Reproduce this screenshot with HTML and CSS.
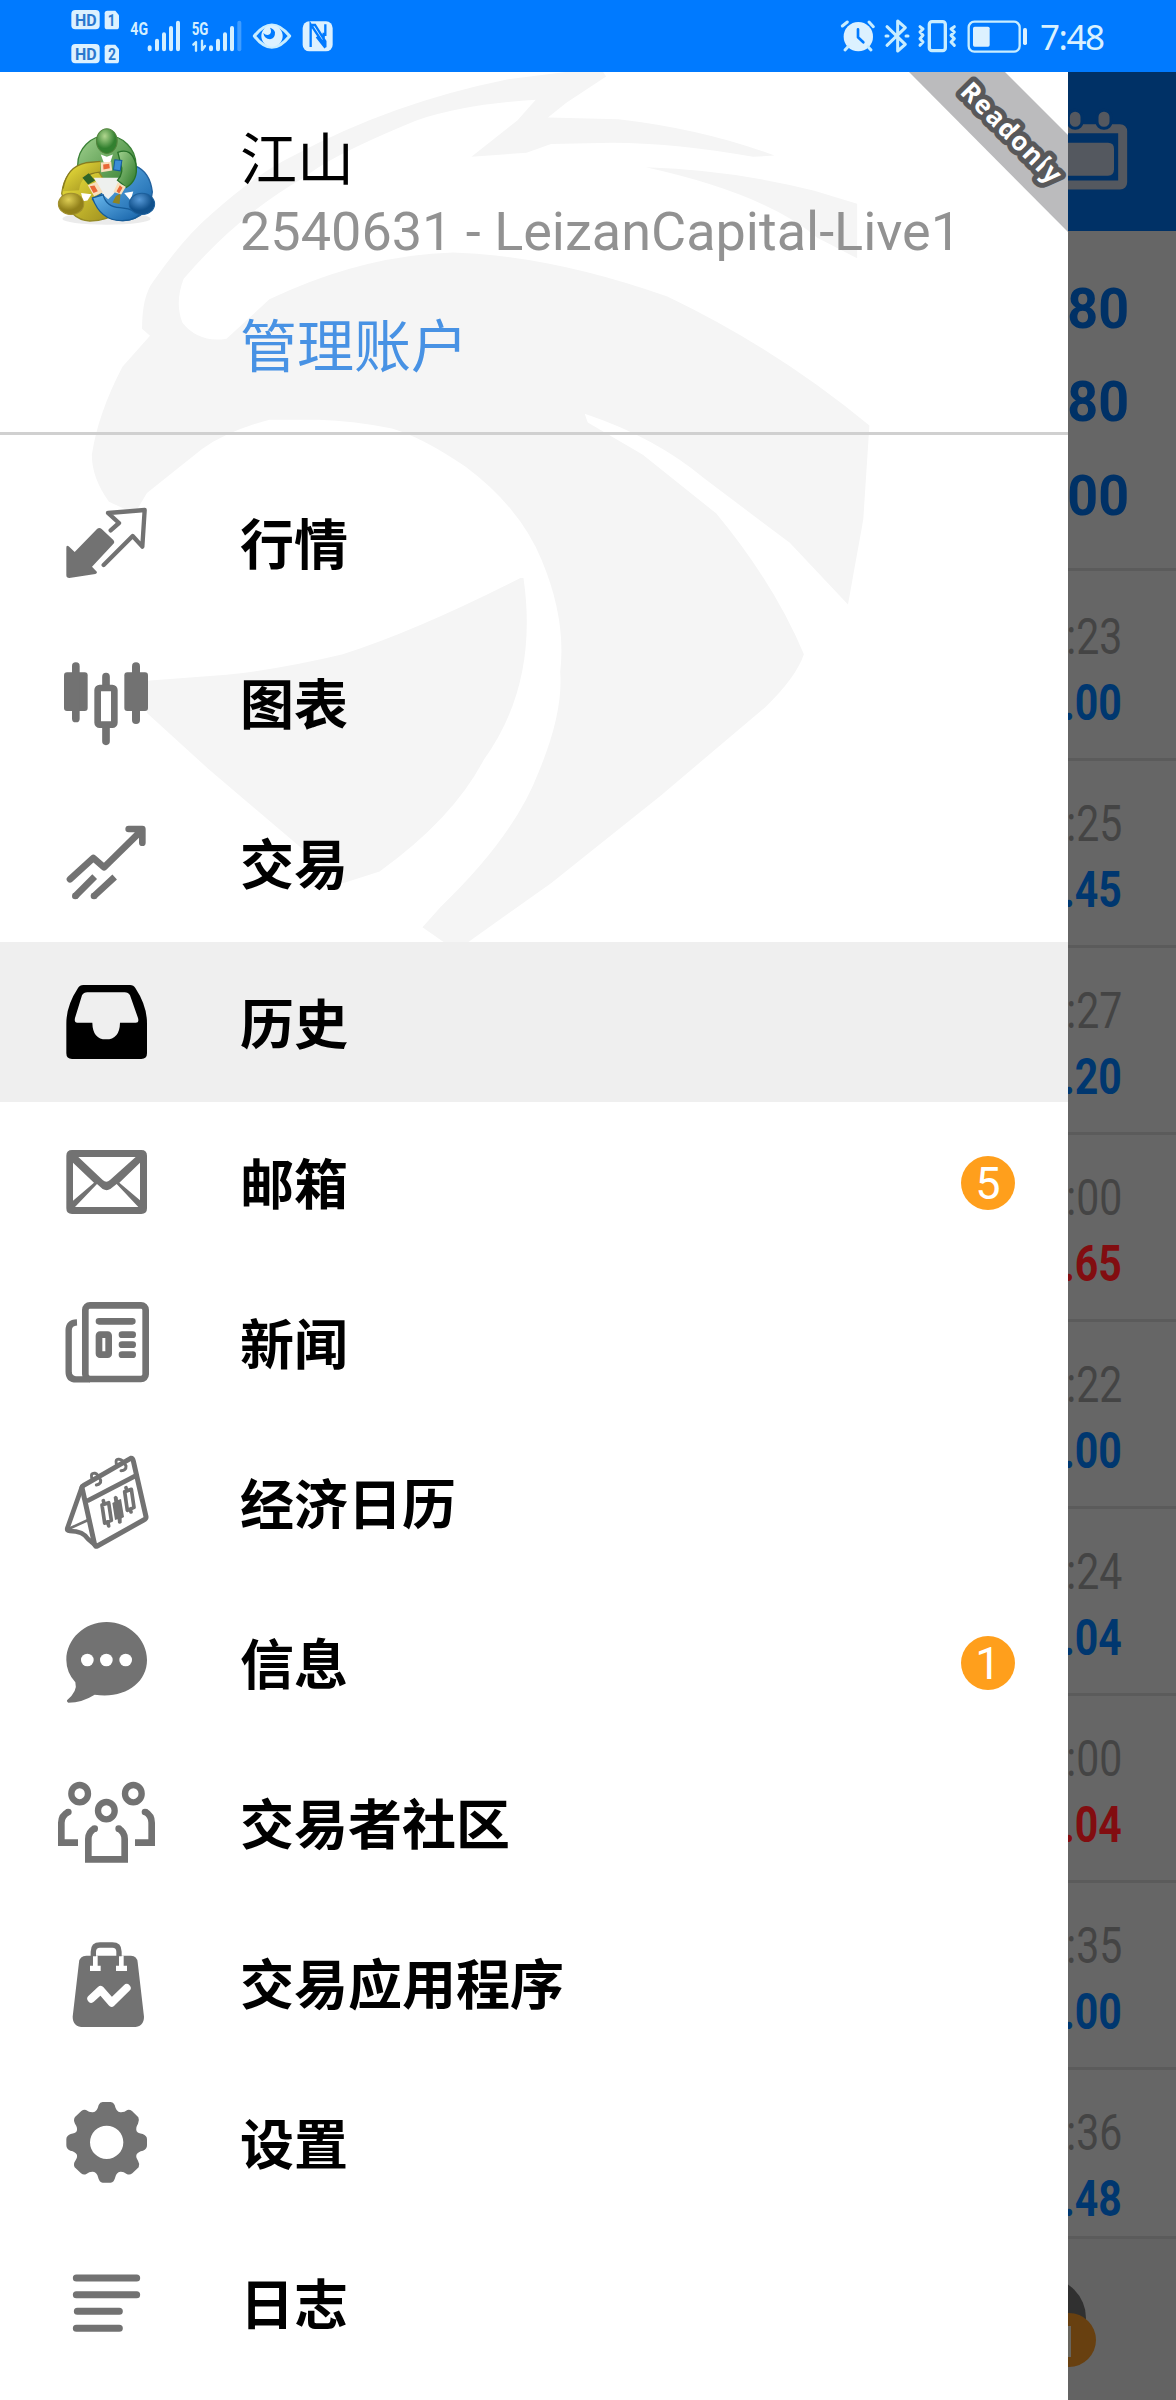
FILE: index.html
```html
<!DOCTYPE html>
<html lang="zh-CN">
<head>
    <meta charset="UTF-8">
    <meta name="viewport" content="width=device-width, initial-scale=1.0">
    <title>历史</title>
    <link rel="stylesheet" href="styles.css">
</head>
<body>
    <div class="status-bar">
        <svg class="status-left" viewBox="0 0 900 216">
            <g class="status-fill">
                <rect x="64" y="30" width="85" height="58" rx="12"/>
                <path d="M172 32H196L207 46V80Q207 88 199 88H172Q164 88 164 80V40Q164 32 172 32Z"/>
                <rect x="64" y="132" width="85" height="58" rx="12"/>
                <path d="M172 134H196L207 148V182Q207 190 199 190H172Q164 190 164 182V142Q164 134 172 134Z"/>
            </g>
            <g class="badge-text">
                <text x="75" y="78" textLength="65" lengthAdjust="spacingAndGlyphs">HD</text>
                <text x="173" y="79" textLength="23" lengthAdjust="spacingAndGlyphs">1</text>
                <text x="75" y="180" textLength="65" lengthAdjust="spacingAndGlyphs">HD</text>
                <text x="174" y="181" textLength="24" lengthAdjust="spacingAndGlyphs">2</text>
            </g>
            <g class="net-text">
                <text x="241" y="104" textLength="53" lengthAdjust="spacingAndGlyphs">4G</text>
                <text x="425" y="104" textLength="50" lengthAdjust="spacingAndGlyphs">5G</text>
            </g>
            <g class="signal">
                <path d="M299 142V148M321 122V148M342 103V148M363 84V148M384 68V148"/>
                <path d="M483 142V148M504 122V148M525 103V148M546 84V148"/>
                <path d="M568 68V148" opacity=".3"/>
            </g>
            <path class="status-line" stroke-width="7" d="M430 134L438 126V152M456 122V150L465 138"/>
            <path class="status-line" stroke-width="9" d="M613 108Q665 42 719 108Q665 176 613 108Z"/>
            <circle class="status-fill" cx="666" cy="108" r="32"/>
            <path fill="#007aff" d="M640 99Q650 109 660 102Q666 94 660 83Q672 86 675 97Q676 116 660 118Q643 117 640 99Z"/>
            <rect class="status-fill" x="758" y="64" width="90" height="90" rx="20"/>
            <path fill="none" stroke="#007aff" stroke-width="7" d="M782 141V73L821 132V98M786 75H795L826 124V142M826 73V108M782 116V141M800 110L826 143"/>
        </svg>
        <div class="status-right">
            <svg class="status-icons" viewBox="0 0 636 216">
                <circle class="status-fill" cx="115" cy="110" r="44"/>
                <path class="status-line" stroke-width="9" d="M67 78L82 66M147 66L160 80M84 140L75 150M144 140L153 150"/>
                <path fill="none" stroke="#007aff" stroke-width="8" stroke-linecap="round" stroke-linejoin="round" d="M114 88V112L130 127"/>
                <path class="status-line" stroke-width="9" d="M201 80L256 133L233 153V63L256 83L201 136M198 108H204M258 108H264"/>
                <rect class="status-line" stroke-width="10" x="328" y="65" width="48" height="87" rx="8"/>
                <path class="status-line" stroke-width="9" d="M300 80L309 87L300 96L309 106L300 116L309 126L300 136M403 80L393 87L403 96L393 106L403 116L393 126L403 136"/>
                <rect class="status-line" stroke-width="7" x="446" y="65" width="153" height="90" rx="17"/>
                <rect class="status-fill" x="459" y="80" width="50" height="60" rx="5"/>
                <rect class="status-fill" x="609" y="84" width="12" height="51" rx="5"/>
            </svg>
            <span class="clock">7:48</span>
        </div>
    </div>

    <div class="screen">
        <div class="drawer">
            <svg class="watermark" viewBox="0 0 1568 1568" preserveAspectRatio="none">
                <path d="M232 475Q232 420 250 395Q300 320 345 280Q420 210 480 180Q640 90 830 50L980 30L990 45L925 90L895 115L1010 118Q1150 135 1265 180L1230 182Q1100 158 1000 158L900 160L860 175L770 182L845 120L875 85Q760 92 680 120Q540 180 500 215Q390 280 300 390Q285 430 298 465Q325 500 370 492L440 425Q590 350 740 345Q900 350 1090 420Q1270 510 1420 640L1410 800L1385 945L1290 840L1150 730Q1070 660 955 620L960 635L1050 690L1170 790Q1265 910 1313 1030Q1300 1070 1250 1120L1080 1270L900 1420L745 1535L690 1495L720 1460Q840 1340 880 1230Q920 1130 915 1060Q925 970 885 870Q850 780 760 710Q690 660 640 645Q580 632 520 630H440Q370 650 330 680L240 755L220 790L178 770Q150 730 150 690Q160 620 200 540L245 487Z"/>
                <path d="M850 900Q680 990 560 1030Q460 1055 370 1065L240 1075V1130L340 1225L560 1420L620 1400Q740 1310 790 1210Q880 1080 855 900Z"/>
                <path d="M1055 200Q1200 205 1330 240L1400 262V355L1335 320Q1250 245 1055 200Z"/>
            </svg>

            <div class="account">
                <svg class="logo" viewBox="0 0 320 320">
                    <defs>
                        <linearGradient id="green" x1="0" y1="0" x2="1" y2="1"><stop offset="0" stop-color="#a2d28f"/><stop offset="1" stop-color="#287526"/></linearGradient>
                        <linearGradient id="yellow" x1="0" y1="0" x2="1" y2="1"><stop offset="0" stop-color="#f3e93e"/><stop offset="1" stop-color="#99891d"/></linearGradient>
                        <linearGradient id="blue" x1="0" y1="0" x2="1" y2="1"><stop offset="0" stop-color="#69b8ed"/><stop offset="1" stop-color="#125ea5"/></linearGradient>
                        <radialGradient id="greenHead" cx=".4" cy=".3"><stop offset="0" stop-color="#b1d78f"/><stop offset="1" stop-color="#32802f"/></radialGradient>
                        <radialGradient id="yellowHead" cx=".4" cy=".3"><stop offset="0" stop-color="#dfcf55"/><stop offset="1" stop-color="#91801a"/></radialGradient>
                        <radialGradient id="blueHead" cx=".4" cy=".3"><stop offset="0" stop-color="#5799d7"/><stop offset="1" stop-color="#11518c"/></radialGradient>
                    </defs>
                    <ellipse cx="160" cy="280" rx="132" ry="18" fill="#ddd" opacity=".6"/>
                    <circle cx="161" cy="119" r="87" fill="url(#green)" stroke="#3a8035" stroke-width="4"/>
                    <path d="M26 205Q35 130 98 118Q150 135 155 185Q160 245 192 260Q165 286 110 287Q50 285 26 205Z" fill="url(#yellow)" stroke="#968b25" stroke-width="4"/>
                    <path d="M246 122Q290 140 297 200Q290 280 209 286Q160 285 118 222L170 190Q200 150 246 122Z" fill="url(#blue)" stroke="#22629f" stroke-width="4"/>
                    <path d="M122 158H199L204 172L181 206L165 222L149 208Z" fill="#eef0ee"/>
                    <path d="M143 88L161 95L179 88L171 113H152Z" fill="#fff"/>
                    <path d="M29 198Q40 125 98 114L142 109L141 141Q83 145 78 195Z" fill="url(#yellow)"/>
                    <path d="M30 190Q42 124 98 113L142 109M141 141Q110 143 96 158" fill="none" stroke="#877b20" stroke-width="4"/>
                    <path d="M194 82Q235 66 248 117Q256 165 219 187L193 165Q213 143 202 114Z" fill="url(#green)" stroke="#287129" stroke-width="4"/>
                    <path d="M118 218L150 209Q160 246 200 247Q226 249 246 258L269 254Q254 285 208 286Q143 288 118 218Z" fill="url(#blue)" stroke="#155b98" stroke-width="4"/>
                    <path d="M88 158L107 144L126 166L105 178Z" fill="#2e6428"/>
                    <path d="M185 104L206 106L201 137L181 134Z" fill="#3b8dd6" stroke="#145b9c" stroke-width="3"/>
                    <path d="M188 212L202 205L199 236L178 232Z" fill="#8f8421"/>
                    <path d="M143 112L174 110L177 136L144 141ZM104 180L130 170L149 201L123 213ZM181 200L194 171L218 185L204 208Z" fill="#f7dfbc"/>
                    <path d="M150 118L168 116L170 129L151 133ZM110 183L124 181L134 198L121 203ZM190 198L200 180L208 188L198 205Z" fill="#e86837"/>
                    <path d="M84 203L115 207L103 226L90 228ZM213 203L240 199L232 226Z" fill="#fff"/>
                    <ellipse cx="161" cy="48" rx="31" ry="37" fill="url(#greenHead)" stroke="#52833c" stroke-width="3"/>
                    <ellipse cx="54" cy="236" rx="38" ry="32" fill="url(#yellowHead)" stroke="#a18f2d" stroke-width="3"/>
                    <ellipse cx="266" cy="236" rx="38" ry="32" fill="url(#blueHead)" stroke="#1c5f9c" stroke-width="3"/>
                </svg>
                <div class="account-text">
                    <div class="account-name">江山</div>
                    <div class="account-id">2540631 - LeizanCapital-Live1</div>
                    <div class="account-link">管理账户</div>
                </div>
                <svg class="ribbon" viewBox="908 72 160 160">
                    <path d="M909 72H1005L1068 135V232Z" fill="#bbbbbd"/>
                    <text transform="translate(959 93) rotate(45)" textLength="130">Readonly</text>
                </svg>
            </div>

            <div class="menu">
                <div class="item">
                    <svg class="icon" viewBox="0 -54 360 480">
                        <path d="M141 147Q148 141 155 147L190 180Q196 187 189 193L126 260L141 276Q141 281 136 282L58 294Q49 294 49 286V203Q49 194 56 199L74 216Z"/>
                        <path class="line" stroke-width="13" d="M161 255L248 168L277 200L284 90L174 99L207 129L182 151"/>
                    </svg>
                    <span class="label">行情</span>
                </div>
                <div class="item">
                    <svg class="icon" viewBox="0 426 360 480">
                        <rect x="42" y="577" width="71" height="116" rx="9"/>
                        <rect x="66" y="547" width="23" height="180" rx="11"/>
                        <rect x="223" y="577" width="71" height="116" rx="9"/>
                        <rect x="246" y="547" width="24" height="185" rx="12"/>
                        <path class="line" stroke-width="23" d="M168 590V620M168 740V784"/>
                        <rect class="line" stroke-width="20" x="143" y="624" width="50" height="110" rx="6"/>
                    </svg>
                    <span class="label">图表</span>
                </div>
                <div class="item">
                    <svg class="icon" viewBox="0 906 360 480">
                        <path class="line" stroke-width="20" d="M60 1198L130 1134L162 1162L276 1050M236 1047H277V1088"/>
                        <path class="line butt" stroke-width="20" d="M75 1249L134 1190M131 1249L194 1191"/>
                        <circle cx="76" cy="1248" r="10"/>
                        <circle cx="132" cy="1248" r="10"/>
                    </svg>
                    <span class="label">交易</span>
                </div>
                <div class="item active">
                    <svg class="icon" viewBox="0 -54 360 480">
                        <path fill-rule="evenodd" d="M100 75H240Q251 75 256 84Q291 137 291 190V280Q291 297 274 297H66Q49 297 49 280V190Q49 137 84 84Q89 75 100 75ZM112 97Q101 97 96 106L75 174Q72 188 82 188H127Q128 238 168 238Q209 238 210 188H257Q268 188 264 174L240 106Q235 97 224 97Z"/>
                    </svg>
                    <span class="label">历史</span>
                </div>
                <div class="item">
                    <svg class="icon" viewBox="0 426 360 480">
                        <path fill-rule="evenodd" d="M66 570H274Q291 570 291 587V745Q291 762 274 762H66Q49 762 49 745V587Q49 570 66 570ZM85 591L158 660Q169 671 180 660L257 591ZM69 608V722L132 668ZM270 608L208 668L270 721ZM141 672L75 741H265L200 672L181 687Q170 694 158 687Z"/>
                    </svg>
                    <span class="label">邮箱</span>
                    <span class="badge">5</span>
                </div>
                <div class="item">
                    <svg class="icon" viewBox="0 906 360 480">
                        <rect class="line" stroke-width="20" x="106" y="1036" width="181" height="221" rx="14"/>
                        <path class="line butt" stroke-width="19" d="M81 1087Q56 1088 56 1111V1235Q56 1258 79 1258H120"/>
                        <path d="M64 1235Q66 1248 76 1248H60Z"/>
                        <path class="line" stroke-width="20" d="M147 1084H247M216 1124H248M216 1154H248M216 1184H248"/>
                        <rect class="line" stroke-width="20" x="147" y="1124" width="29" height="60" rx="3"/>
                    </svg>
                    <span class="label">新闻</span>
                </div>
                <div class="item">
                    <svg class="icon" viewBox="0 -24 360 480">
                        <path class="line" stroke-width="15" d="M101 166L242 85Q248 84 250 93L288 260Q289 266 281 270L142 348Q136 351 134 344L97 177Q94 170 101 166Z"/>
                        <path class="line" stroke-width="14" d="M115 211L259 136M96 170L52 295Q50 303 59 303Q100 303 115 328L136 346"/>
                        <path class="line" stroke-width="8" d="M60 295L116 269"/>
                        <path class="line" stroke-width="9" d="M125 144Q121 128 135 130Q144 132 152 151Q153 162 139 165M199 102Q195 85 208 88Q219 89 228 108Q229 121 213 122"/>
                        <path class="line" stroke-width="11" d="M156 225L176 218L184 271L164 279ZM160 212L162 220M174 278L176 288M224 185L244 178L252 232L232 241ZM228 173L230 180M241 238L243 246"/>
                        <path d="M187 219L193 216L191 202Q197 193 203 202L204 210L213 207L222 261L215 265V278Q209 284 204 279L203 268L195 270Z"/>
                    </svg>
                    <span class="label">经济日历</span>
                </div>
                <div class="item">
                    <svg class="icon" viewBox="0 456 360 480">
                        <path d="M170 576C236 576 291 627 291 690C291 761 220 808 134 794Q96 818 55 818Q50 817 51 811Q84 783 76 757Q49 727 49 690C49 627 103 576 170 576Z"/>
                        <g fill="#fff"><circle cx="112" cy="690" r="19"/><circle cx="169" cy="690" r="19"/><circle cx="227" cy="690" r="19"/></g>
                    </svg>
                    <span class="label">信息</span>
                    <span class="badge">1</span>
                </div>
                <div class="item">
                    <svg class="icon" viewBox="0 936 360 480">
                        <g class="line" stroke-width="19">
                            <ellipse cx="89" cy="1091" rx="25" ry="26"/><ellipse cx="250" cy="1091" rx="25" ry="26"/><ellipse cx="169" cy="1142" rx="25" ry="26"/>
                        </g>
                        <g class="line butt sharp" stroke-width="20">
                            <path d="M56 1145Q34 1156 34 1178V1238H84M285 1145Q305 1156 305 1178V1238H255M134 1195Q115 1206 115 1227V1288H224V1227Q224 1206 205 1195"/>
                        </g>
                        <circle cx="55" cy="1146" r="10"/><circle cx="285" cy="1146" r="10"/><circle cx="134" cy="1196" r="10"/><circle cx="206" cy="1196" r="10"/>
                    </svg>
                    <span class="label">交易者社区</span>
                </div>
                <div class="item">
                    <svg class="icon" viewBox="0 6 360 480">
                        <path d="M109 167H243Q261 167 263 187L282 350Q282 381 249 381H101Q68 381 68 350L87 187Q89 167 109 167Z"/>
                        <path fill="#fff" d="M129 167H143V197H152V213H120V197H129ZM207 167H221V197H231V213H198V197H207Z"/>
                        <path class="line butt" stroke-width="16" d="M130 169V155Q130 135 150 135H187Q207 135 207 155V169"/>
                        <path class="line white" stroke-width="24" d="M124 296L152 270L185 308L230 264"/>
                    </svg>
                    <span class="label">交易应用程序</span>
                </div>
                <div class="item">
                    <svg class="icon" viewBox="0 486 360 480">
                        <path fill-rule="evenodd" d="M158 606H182Q190 606 194 615Q199 637 211 637Q223 638 232 630Q239 628 246 633L265 652Q269 660 264 671Q256 684 260 694Q264 700 278 702Q291 707 291 718V736Q291 748 279 752Q264 755 260 763Q256 771 264 782Q270 791 266 802L247 820Q239 826 230 822Q220 814 211 815Q199 817 196 831Q192 848 182 848H158Q148 848 144 831Q141 817 129 815Q119 814 109 822Q101 826 93 820L74 802Q69 791 76 782Q84 771 80 763Q76 755 61 752Q49 748 49 736V718Q49 707 62 702Q76 700 80 694Q84 684 75 671Q69 660 75 651L94 633Q101 628 108 630Q118 638 129 637Q141 637 146 615Q150 606 158 606ZM170 677A50 50 0 1 0 170 777A50 50 0 1 0 170 677Z"/>
                    </svg>
                    <span class="label">设置</span>
                </div>
                <div class="item">
                    <svg class="icon" viewBox="0 966 360 480">
                        <path class="line" stroke-width="21" d="M79 1134H260M79 1184H260M82 1234H208M79 1285H208"/>
                    </svg>
                    <span class="label">日志</span>
                </div>
            </div>
        </div>

        <div class="history">
            <div class="toolbar">
                <svg class="calendar" viewBox="744 216 324 480">
                    <path fill="none" stroke="#54585f" stroke-width="27" d="M735 386H900Q908 386 908 394V547Q908 555 900 555H735"/>
                    <path fill="#54585f" d="M744 428H864Q882 428 882 446V508Q882 527 864 527H744Z"/>
                    <g fill="#54585f" stroke="#003166" stroke-width="9"><rect x="745" y="331" width="41" height="54" rx="20"/><rect x="831" y="331" width="42" height="54" rx="20"/></g>
                </svg>
            </div>
            <div class="totals">
                <div>80</div>
                <div>80</div>
                <div>00</div>
            </div>
            <div class="deals">
                <div class="deal"><span class="time">:23</span><span class="profit">.00</span></div>
                <div class="deal"><span class="time">:25</span><span class="profit">.45</span></div>
                <div class="deal"><span class="time">:27</span><span class="profit">.20</span></div>
                <div class="deal"><span class="time">:00</span><span class="profit loss">.65</span></div>
                <div class="deal"><span class="time">:22</span><span class="profit">.00</span></div>
                <div class="deal"><span class="time">:24</span><span class="profit">.04</span></div>
                <div class="deal"><span class="time">:00</span><span class="profit loss">.04</span></div>
                <div class="deal"><span class="time">:35</span><span class="profit">.00</span></div>
                <div class="deal"><span class="time">:36</span><span class="profit">.48</span></div>
            </div>
            <div class="tab-bar">
                <svg class="tab-icon" viewBox="1068 2240 108 160">
                    <circle cx="1046" cy="2317" r="40" fill="#303030"/>
                    <circle cx="1069" cy="2339" r="27" fill="#684010"/>
                    <path d="M1068 2325H1071V2356H1068Z" fill="#68665f"/>
                </svg>
            </div>
        </div>
    </div>
</body>
</html>
```
FILE: styles.css
```css
* {
    box-sizing: border-box;
}
body {
    margin: 0;
    width: 1176px;
    height: 2400px;
    overflow: hidden;
    background: #fff;
    font-family: Roboto, "Noto Sans CJK SC", sans-serif;
}
svg {
    display: block;
    flex: none;
}

/* status bar */
.status-bar {
    display: flex;
    justify-content: space-between;
    height: 72px;
    padding: 0 73px 0 50px;
    background: #007aff;
}
.status-left {
    width: 300px;
    height: 72px;
}
.status-right {
    display: flex;
    width: 283px;
}
.status-icons {
    width: 212px;
    height: 72px;
}
.clock {
    margin-left: 8px;
    font: 35px/74px "Noto Sans", sans-serif;
    color: #d9f1ff;
    letter-spacing: -1.5px;
}
.status-fill {
    fill: #dcf1ff;
}
.status-line {
    fill: none;
    stroke: #c8edff;
    stroke-linecap: round;
    stroke-linejoin: round;
}
.badge-text {
    font: bold 47px Roboto, sans-serif;
    fill: #2a78cf;
}
.net-text {
    font: bold 54px Roboto, sans-serif;
    fill: #d4efff;
}
.signal {
    stroke: #d4efff;
    stroke-width: 12;
    stroke-linecap: round;
}

.screen {
    display: flex;
    height: 2328px;
}

/* drawer */
.drawer {
    position: relative;
    width: 1068px;
    overflow: hidden;
    background: #fff;
}
.watermark {
    position: absolute;
    top: -22px;
    left: 0;
    width: 960px;
    height: 920px;
    fill: #f5f5f5;
}
.account {
    position: relative;
    display: flex;
    height: 363px;
    padding: 53px 0 0 53px;
    border-bottom: 3px solid #d0d0d0;
}
.logo {
    width: 107px;
    height: 107px;
}
.account-text {
    margin-left: 80px;
}
.account-name {
    font-size: 57px;
    line-height: 72px;
}
.account-id {
    font-size: 54px;
    line-height: 70px;
    color: #929292;
    white-space: nowrap;
}
.account-link {
    margin-top: 45px;
    font-size: 57px;
    line-height: 72px;
    color: #4892e4;
}
.ribbon {
    position: absolute;
    top: 0;
    right: 0;
    width: 160px;
    height: 160px;
}
.ribbon text {
    font: bold 26px "Noto Sans", sans-serif;
    fill: #fff;
    stroke: #58585a;
    stroke-width: 10px;
    stroke-linejoin: round;
    paint-order: stroke;
}

.menu {
    position: relative;
    padding-top: 27px;
}
.item {
    display: flex;
    align-items: center;
    height: 160px;
    padding: 0 53px 0 50px;
}
.item.active {
    background: #efefef;
}
.icon {
    width: 120px;
    height: 160px;
    fill: #727272;
}
.active .icon {
    fill: #000;
}
.line {
    fill: none;
    stroke: #727272;
    stroke-linecap: round;
    stroke-linejoin: round;
}
.line.butt {
    stroke-linecap: butt;
}
.line.sharp {
    stroke-linejoin: miter;
}
.line.white {
    stroke: #fff;
}
.label {
    margin-left: 70px;
    font-family: "Noto Sans CJK SC", sans-serif;
    font-weight: bold;
    font-size: 54px;
    line-height: 80px;
}
.badge {
    width: 54px;
    height: 54px;
    margin: 2px 0 0 auto;
    border-radius: 50%;
    background: #ff9f1c;
    color: #fff;
    font-size: 45px;
    line-height: 56px;
    text-align: center;
}

/* history page under the shade */
.history {
    width: 108px;
    overflow: hidden;
    background: #666;
}
.toolbar {
    height: 159px;
    background: #003166;
}
.calendar {
    width: 108px;
    height: 160px;
}
.totals {
    display: flex;
    flex-direction: column;
    align-items: flex-end;
    height: 340px;
    padding: 32px 47px 0 0;
    border-bottom: 3px solid #5b5b5b;
    font-weight: bold;
    font-size: 55px;
    line-height: 93.3px;
    color: #003166;
}
.totals div {
    transform: scaleX(.98);
    transform-origin: 100% 50%;
}
.deal {
    display: flex;
    flex-direction: column;
    align-items: flex-end;
    height: 187px;
    padding: 30px 54px 0 0;
    border-bottom: 3px solid #5b5b5b;
    font-size: 50px;
    line-height: 66px;
}
.deal:first-child {
    height: 190px;
    padding-top: 33px;
}
.deal:last-child {
    height: 169px;
}
.time,
.profit {
    transform: scaleX(.82);
    transform-origin: 100% 50%;
}
.time {
    color: #444;
}
.profit {
    font-weight: bold;
    color: #00376f;
}
.profit.loss {
    color: #820d10;
}
.tab-bar {
    height: 164px;
    padding-top: 2px;
    background: #636363;
}
.tab-icon {
    width: 108px;
    height: 160px;
}
```
